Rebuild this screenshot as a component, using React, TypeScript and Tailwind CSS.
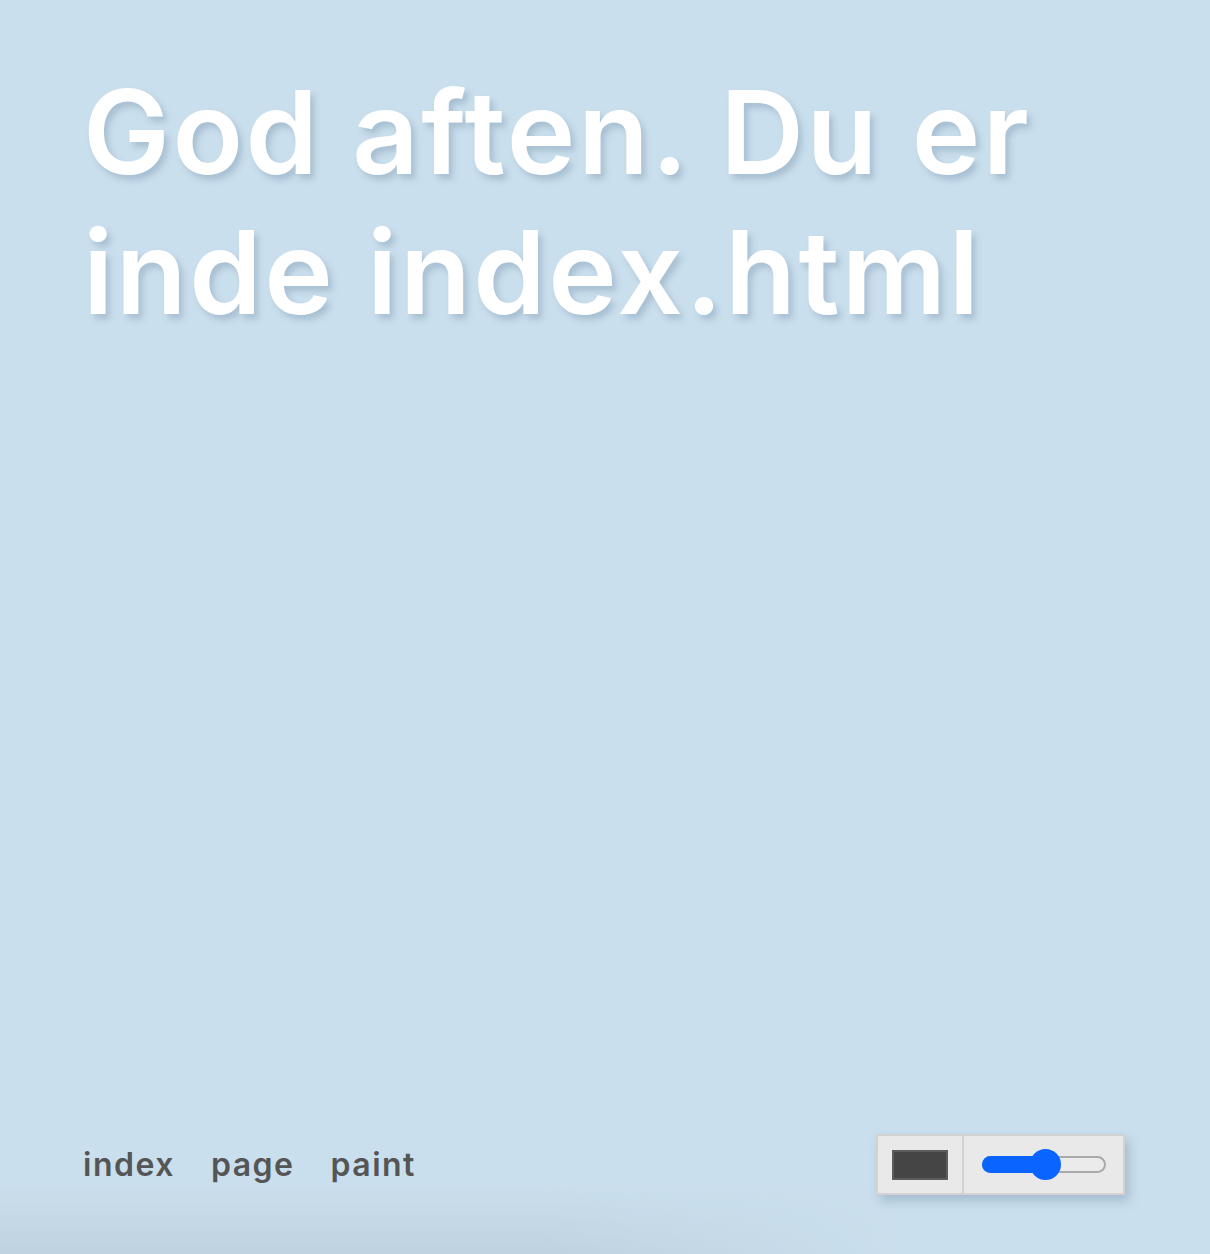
import React from 'react';

// --- sub-components ---
const NavLinks = () => (
    <nav className="flex items-baseline gap-[36px] text-[32px] font-semibold text-[#555555] tracking-[1.5px]">
        <a href="#">index</a>
        <a href="#">page</a>
        <a href="#">paint</a>
    </nav>
);

const PaintControls = () => (
    <div className="flex h-[61px] w-[249px] border-2 border-[#d2d2d2] bg-[#e9e9e9] shadow-[4px_6px_10px_rgba(80,110,140,0.3)]">
        <div className="flex w-[86px] items-center justify-center border-r-2 border-[#d2d2d2]">
            <div className="h-[30px] w-[56px] border-2 border-[#5c5c5c] bg-[#454545]" />
        </div>
        <div className="flex flex-1 items-center justify-center">
            <div className="relative h-[17px] w-[124px] rounded-full border-2 border-[#a9a9a9] bg-[#ebebeb]">
                <div className="absolute -left-[2px] -top-[2px] h-[17px] w-[66px] rounded-l-full bg-[#0a64ff]" />
                <div className="absolute left-[46px] top-[-9.5px] h-[31px] w-[31px] rounded-full bg-[#0a64ff]" />
            </div>
        </div>
    </div>
);

export default function App() {
    return (
        <main
            className="relative flex h-[1254px] w-full flex-col justify-between overflow-hidden bg-[#cadfed] px-[83px] pb-[59px] pt-[62px]"
            style={{ fontFamily: 'Inter, "DejaVu Sans", sans-serif' }}
        >
            <h1 className="max-w-[1060px] text-[116px] font-semibold leading-[140px] tracking-[2.5px] text-white [text-shadow:4px_5px_6px_rgba(90,120,150,0.3)]">
                God aften. Du er inde index.html
            </h1>

            <footer className="flex items-center justify-between pr-[2px]">
                <NavLinks />
                <PaintControls />
            </footer>

            {/* svag skygge i bunden */}
            <div className="pointer-events-none absolute bottom-0 left-0 h-[70px] w-[900px] bg-gradient-to-b from-transparent to-[#bccfdd] opacity-80 [mask-image:linear-gradient(to_right,black_60%,transparent)]" />
        </main>
    );
}
